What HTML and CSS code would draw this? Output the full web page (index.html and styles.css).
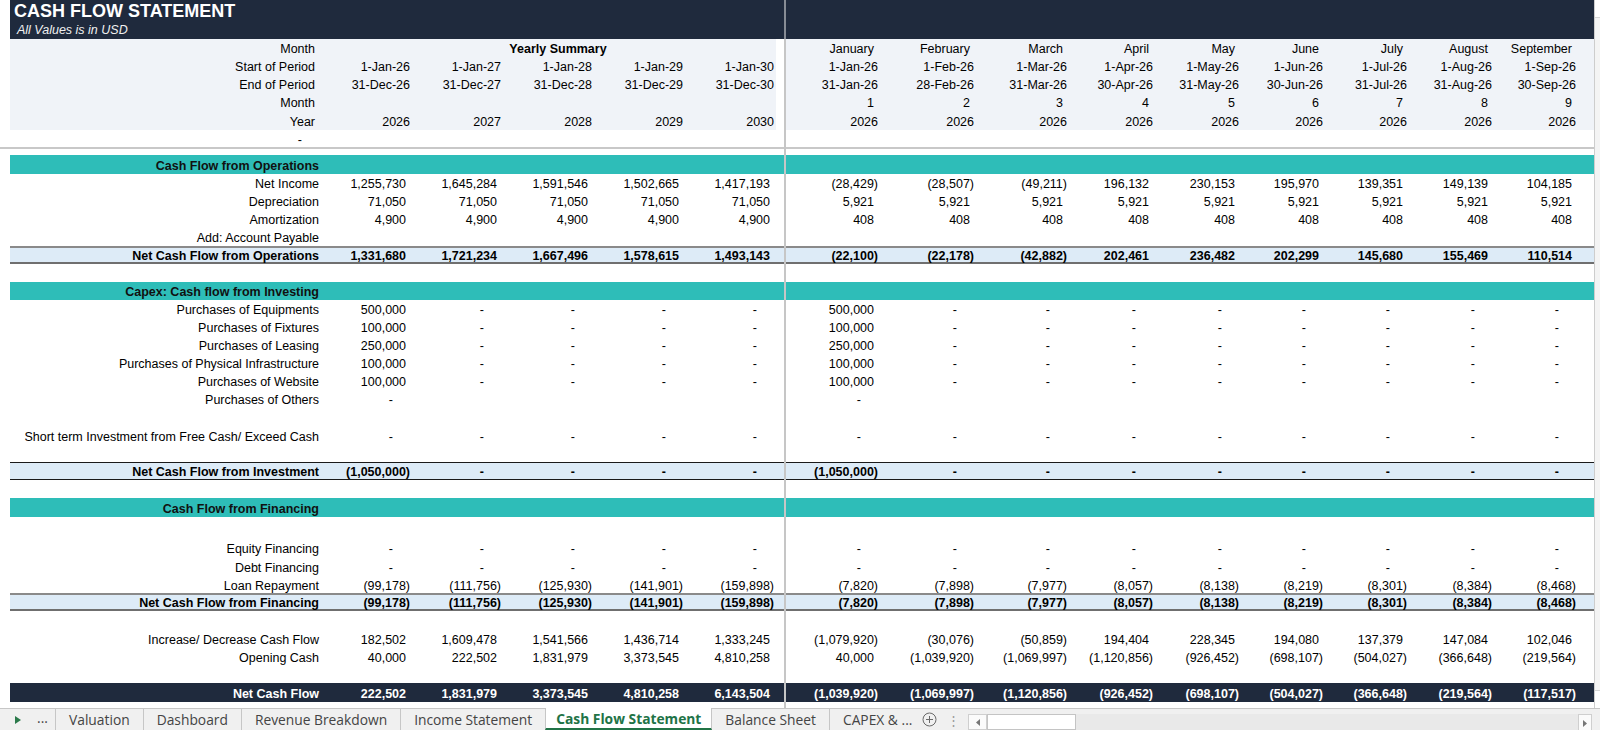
FILE: index.html
```html
<!DOCTYPE html>
<html lang="en">
<head>
<meta charset="utf-8">
<title>Cash Flow Statement</title>
<link rel="stylesheet" href="styles.css">
</head>
<body>
<div class="app">
  <div class="main">
    <div class="sheet">
      <div class="hdr">
        <div class="title">CASH FLOW STATEMENT</div>
        <div class="sub">All Values is in USD</div>
      </div>

      <div class="r hd lt"><span>Month</span><span class="ys">Yearly Summary</span><span class="gap"></span><span>January</span><span>February</span><span>March</span><span>April</span><span>May</span><span>June</span><span>July</span><span>August</span><span>September</span></div>
      <div class="r hd lt dt"><span>Start of Period</span><span>1-Jan-26</span><span>1-Jan-27</span><span>1-Jan-28</span><span>1-Jan-29</span><span>1-Jan-30</span><span class="gap"></span><span>1-Jan-26</span><span>1-Feb-26</span><span>1-Mar-26</span><span>1-Apr-26</span><span>1-May-26</span><span>1-Jun-26</span><span>1-Jul-26</span><span>1-Aug-26</span><span>1-Sep-26</span></div>
      <div class="r hd lt dt"><span>End of Period</span><span>31-Dec-26</span><span>31-Dec-27</span><span>31-Dec-28</span><span>31-Dec-29</span><span>31-Dec-30</span><span class="gap"></span><span>31-Jan-26</span><span>28-Feb-26</span><span>31-Mar-26</span><span>30-Apr-26</span><span>31-May-26</span><span>30-Jun-26</span><span>31-Jul-26</span><span>31-Aug-26</span><span>30-Sep-26</span></div>
      <div class="r hd lt"><span>Month</span><span></span><span></span><span></span><span></span><span></span><span class="gap"></span><span>1</span><span>2</span><span>3</span><span>4</span><span>5</span><span>6</span><span>7</span><span>8</span><span>9</span></div>
      <div class="r hd lt dt h19"><span>Year</span><span>2026</span><span>2027</span><span>2028</span><span>2029</span><span>2030</span><span class="gap"></span><span>2026</span><span>2026</span><span>2026</span><span>2026</span><span>2026</span><span>2026</span><span>2026</span><span>2026</span><span>2026</span></div>
      <div class="r dashrow h17"><span>-</span></div>
      <div class="freeze"></div>

      <div class="blank h6"></div>
      <div class="r teal h19"><span>Cash Flow from Operations</span></div>
      <div class="r"><span>Net Income</span><span>1,255,730</span><span>1,645,284</span><span>1,591,546</span><span>1,502,665</span><span>1,417,193</span><span class="gap"></span><span class="n">(28,429)</span><span class="n">(28,507)</span><span class="n">(49,211)</span><span>196,132</span><span>230,153</span><span>195,970</span><span>139,351</span><span>149,139</span><span>104,185</span></div>
      <div class="r"><span>Depreciation</span><span>71,050</span><span>71,050</span><span>71,050</span><span>71,050</span><span>71,050</span><span class="gap"></span><span>5,921</span><span>5,921</span><span>5,921</span><span>5,921</span><span>5,921</span><span>5,921</span><span>5,921</span><span>5,921</span><span>5,921</span></div>
      <div class="r"><span>Amortization</span><span>4,900</span><span>4,900</span><span>4,900</span><span>4,900</span><span>4,900</span><span class="gap"></span><span>408</span><span>408</span><span>408</span><span>408</span><span>408</span><span>408</span><span>408</span><span>408</span><span>408</span></div>
      <div class="r"><span>Add: Account Payable</span></div>
      <div class="r net b"><span>Net Cash Flow from Operations</span><span>1,331,680</span><span>1,721,234</span><span>1,667,496</span><span>1,578,615</span><span>1,493,143</span><span class="gap"></span><span class="n">(22,100)</span><span class="n">(22,178)</span><span class="n">(42,882)</span><span>202,461</span><span>236,482</span><span>202,299</span><span>145,680</span><span>155,469</span><span>110,514</span></div>
      <div class="blank"></div>

      <div class="r teal"><span>Capex: Cash flow from Investing</span></div>
      <div class="r"><span>Purchases of Equipments</span><span>500,000</span><span class="z">-</span><span class="z">-</span><span class="z">-</span><span class="z">-</span><span class="gap"></span><span>500,000</span><span class="z">-</span><span class="z">-</span><span class="z">-</span><span class="z">-</span><span class="z">-</span><span class="z">-</span><span class="z">-</span><span class="z">-</span></div>
      <div class="r"><span>Purchases of Fixtures</span><span>100,000</span><span class="z">-</span><span class="z">-</span><span class="z">-</span><span class="z">-</span><span class="gap"></span><span>100,000</span><span class="z">-</span><span class="z">-</span><span class="z">-</span><span class="z">-</span><span class="z">-</span><span class="z">-</span><span class="z">-</span><span class="z">-</span></div>
      <div class="r"><span>Purchases of Leasing</span><span>250,000</span><span class="z">-</span><span class="z">-</span><span class="z">-</span><span class="z">-</span><span class="gap"></span><span>250,000</span><span class="z">-</span><span class="z">-</span><span class="z">-</span><span class="z">-</span><span class="z">-</span><span class="z">-</span><span class="z">-</span><span class="z">-</span></div>
      <div class="r"><span>Purchases of Physical Infrastructure</span><span>100,000</span><span class="z">-</span><span class="z">-</span><span class="z">-</span><span class="z">-</span><span class="gap"></span><span>100,000</span><span class="z">-</span><span class="z">-</span><span class="z">-</span><span class="z">-</span><span class="z">-</span><span class="z">-</span><span class="z">-</span><span class="z">-</span></div>
      <div class="r"><span>Purchases of Website</span><span>100,000</span><span class="z">-</span><span class="z">-</span><span class="z">-</span><span class="z">-</span><span class="gap"></span><span>100,000</span><span class="z">-</span><span class="z">-</span><span class="z">-</span><span class="z">-</span><span class="z">-</span><span class="z">-</span><span class="z">-</span><span class="z">-</span></div>
      <div class="r"><span>Purchases of Others</span><span class="z">-</span><span></span><span></span><span></span><span></span><span class="gap"></span><span class="z">-</span></div>
      <div class="blank"></div>
      <div class="r h19"><span>Short term Investment from Free Cash/ Exceed Cash</span><span class="z">-</span><span class="z">-</span><span class="z">-</span><span class="z">-</span><span class="z">-</span><span class="gap"></span><span class="z">-</span><span class="z">-</span><span class="z">-</span><span class="z">-</span><span class="z">-</span><span class="z">-</span><span class="z">-</span><span class="z">-</span><span class="z">-</span></div>
      <div class="blank h17"></div>
      <div class="r inv b"><span>Net Cash Flow from Investment</span><span class="n">(1,050,000)</span><span class="z">-</span><span class="z">-</span><span class="z">-</span><span class="z">-</span><span class="gap"></span><span class="n">(1,050,000)</span><span class="z">-</span><span class="z">-</span><span class="z">-</span><span class="z">-</span><span class="z">-</span><span class="z">-</span><span class="z">-</span><span class="z">-</span></div>
      <div class="blank"></div>

      <div class="r teal h19"><span>Cash Flow from Financing</span></div>
      <div class="blank h21"></div>
      <div class="r h19"><span>Equity Financing</span><span class="z">-</span><span class="z">-</span><span class="z">-</span><span class="z">-</span><span class="z">-</span><span class="gap"></span><span class="z">-</span><span class="z">-</span><span class="z">-</span><span class="z">-</span><span class="z">-</span><span class="z">-</span><span class="z">-</span><span class="z">-</span><span class="z">-</span></div>
      <div class="r h19"><span>Debt Financing</span><span class="z">-</span><span class="z">-</span><span class="z">-</span><span class="z">-</span><span class="z">-</span><span class="gap"></span><span class="z">-</span><span class="z">-</span><span class="z">-</span><span class="z">-</span><span class="z">-</span><span class="z">-</span><span class="z">-</span><span class="z">-</span><span class="z">-</span></div>
      <div class="r h17"><span>Loan Repayment</span><span class="n">(99,178)</span><span class="n">(111,756)</span><span class="n">(125,930)</span><span class="n">(141,901)</span><span class="n">(159,898)</span><span class="gap"></span><span class="n">(7,820)</span><span class="n">(7,898)</span><span class="n">(7,977)</span><span class="n">(8,057)</span><span class="n">(8,138)</span><span class="n">(8,219)</span><span class="n">(8,301)</span><span class="n">(8,384)</span><span class="n">(8,468)</span></div>
      <div class="r net b"><span>Net Cash Flow from Financing</span><span class="n">(99,178)</span><span class="n">(111,756)</span><span class="n">(125,930)</span><span class="n">(141,901)</span><span class="n">(159,898)</span><span class="gap"></span><span class="n">(7,820)</span><span class="n">(7,898)</span><span class="n">(7,977)</span><span class="n">(8,057)</span><span class="n">(8,138)</span><span class="n">(8,219)</span><span class="n">(8,301)</span><span class="n">(8,384)</span><span class="n">(8,468)</span></div>
      <div class="blank h19"></div>

      <div class="r"><span>Increase/ Decrease Cash Flow</span><span>182,502</span><span>1,609,478</span><span>1,541,566</span><span>1,436,714</span><span>1,333,245</span><span class="gap"></span><span class="n">(1,079,920)</span><span class="n">(30,076)</span><span class="n">(50,859)</span><span>194,404</span><span>228,345</span><span>194,080</span><span>137,379</span><span>147,084</span><span>102,046</span></div>
      <div class="r"><span>Opening Cash</span><span>40,000</span><span>222,502</span><span>1,831,979</span><span>3,373,545</span><span>4,810,258</span><span class="gap"></span><span>40,000</span><span class="n">(1,039,920)</span><span class="n">(1,069,997)</span><span class="n">(1,120,856)</span><span class="n">(926,452)</span><span class="n">(698,107)</span><span class="n">(504,027)</span><span class="n">(366,648)</span><span class="n">(219,564)</span></div>
      <div class="blank h17"></div>
      <div class="r dk b h19"><span>Net Cash Flow</span><span>222,502</span><span>1,831,979</span><span>3,373,545</span><span>4,810,258</span><span>6,143,504</span><span class="gap"></span><span class="n">(1,039,920)</span><span class="n">(1,069,997)</span><span class="n">(1,120,856)</span><span class="n">(926,452)</span><span class="n">(698,107)</span><span class="n">(504,027)</span><span class="n">(366,648)</span><span class="n">(219,564)</span><span class="n">(117,517)</span></div>

      <div class="vline"></div>
    </div>
    <div class="vscroll"><div class="vbtn"></div><div class="vtrack"></div><div class="vbtn"></div></div>
  </div>

  <div class="tabbar">
    <span class="nav"><svg width="6" height="8" viewBox="0 0 6 8"><polygon points="0,0 6,4 0,8" fill="#2b7a4b"/></svg></span>
    <span class="more">...</span>
    <span class="tab">Valuation</span>
    <span class="tab">Dashboard</span>
    <span class="tab">Revenue Breakdown</span>
    <span class="tab">Income Statement</span>
    <span class="tab on">Cash Flow Statement</span>
    <span class="tab">Balance Sheet</span>
    <span class="tab last">CAPEX &amp; ...</span>
    <span class="add"><svg width="15" height="15" viewBox="0 0 15 15"><circle cx="7.5" cy="7.5" r="6.5" fill="none" stroke="#6a6a6a" stroke-width="1"/><path d="M7.5 4v7M4 7.5h7" stroke="#6a6a6a" stroke-width="1"/></svg></span>
    <span class="dots">⋮</span>
    <div class="hs">
      <span class="hbtn"><svg width="4" height="7" viewBox="0 0 4 7"><polygon points="4,0 0,3.5 4,7" fill="#777"/></svg></span>
      <span class="thumb"></span>
      <span class="track"></span>
      <span class="hbtn r"><svg width="4" height="7" viewBox="0 0 4 7"><polygon points="0,0 4,3.5 0,7" fill="#777"/></svg></span>
    </div>
  </div>
</div>
</body>
</html>
```

FILE: styles.css
```css
* { box-sizing: border-box; }
html, body { margin: 0; padding: 0; }
body {
  width: 1600px;
  height: 730px;
  overflow: hidden;
  background: #fff;
  color: #000;
  font-family: "Liberation Sans", Arial, sans-serif;
  font-size: 12.5px;
}
.app { display: flex; flex-direction: column; height: 730px; }
.main { display: flex; height: 708px; }
.sheet { position: relative; width: 1594px; padding-left: 10px; }

.hdr { background: #1f2a3d; color: #fff; }
.title { height: 22px; line-height: 22px; font-size: 18px; font-weight: bold; padding-left: 4px; }
.sub { height: 17px; line-height: 17px; font-style: italic; padding-left: 7px; color: #f0f0f0; }

.r {
  display: grid;
  grid-template-columns: 311px repeat(5, 91px) 10px 94px 96px 93px 86px 86px 84px 84px 85px 84px 16px;
  height: 18px;
  align-items: center;
}
.r > span {
  text-align: right;
  white-space: nowrap;
  overflow: hidden;
  padding-right: 6px;
  padding-top: 2px;
  line-height: 14px;
}
.r > .n { padding-right: 2px; }
.r > .z { padding-right: 19px; }
.dt > span { padding-right: 2px; }
.r > span:first-child { padding-right: 2px; }
.hd > span:first-child { padding-right: 6px; }
.dashrow > span:first-child { padding-right: 19px; }
.r > .ys { grid-column: span 5; text-align: center; padding: 2px 6px 0 25px; font-weight: bold; }

.lt { background: #f0f3f8; }
.lt > .gap { background: #fff; align-self: stretch; }

.h6 { height: 6px; }
.h17 { height: 17px; }
.h19 { height: 19px; }
.h21 { height: 21px; }
.blank { height: 18px; }
.blank.h6 { height: 6px; }
.blank.h17 { height: 17px; }
.blank.h19 { height: 19px; }
.blank.h21 { height: 21px; }

.freeze { height: 2px; margin-left: -10px; background: #c8c8c8; }

.teal { background: #2ebdb8; }
.teal > span { font-weight: bold; color: #111; }
.b > span { font-weight: bold; }
.net { background: #ddebf7; border-top: 2px solid #8a8a8a; border-bottom: 2px solid #6f6f6f; }
.inv { background: #ddebf7; border-top: 1px solid #1a1a1a; border-bottom: 1px solid #1a1a1a; }
.dk { background: #1f2a3d; color: #fff; }

.vline {
  position: absolute;
  left: 784px;
  top: 0;
  width: 2px;
  height: 708px;
  background: linear-gradient(#878c95 0, #878c95 39px, #c6c6c6 39px);
}

.vscroll { width: 6px; border-left: 1px solid #cdcdcd; background: #f4f4f4; display: flex; flex-direction: column; }
.vbtn { height: 18px; background: #fff; border-bottom: 1px solid #d6d6d6; }
.vbtn:last-child { border-top: 1px solid #d6d6d6; border-bottom: 0; }
.vtrack { flex: 1; }

.tabbar {
  height: 22px;
  border-top: 1px solid #c6c6c6;
  background: #f0f0f0;
  display: flex;
  align-items: stretch;
  font-family: "Open Sans", "Noto Sans", sans-serif;
  font-size: 13.8px;
  color: #444;
}
.nav { width: 30px; display: flex; align-items: center; padding-left: 15px; }
.more { width: 25px; display: flex; align-items: center; justify-content: center; padding-bottom: 4px; }
.tab { display: flex; align-items: center; padding: 0 13px; border-left: 1px solid #c6c6c6; white-space: nowrap; }
.tab.on {
  background: #fff;
  color: #217346;
  font-weight: bold;
  padding: 0 10px;
  margin-top: -1px;
  border-right: 1px solid #c6c6c6;
  border-bottom: 2px solid #217346;
}
.tab.on + .tab { border-left: 0; }
.tab.last { padding-right: 6px; }
.add { display: flex; align-items: center; padding: 0 4px; }
.dots { display: flex; align-items: center; padding: 0 8px 0 6px; color: #999; font-size: 13px; }
.hs { flex: 1; display: flex; align-self: flex-end; height: 16px; margin-right: 8px; background: #e9e9e9; }
.hbtn { width: 19px; display: flex; align-items: center; justify-content: center; background: #fbfbfb; border: 1px solid #cfcfcf; }
.hbtn.r { width: 14px; }
.thumb { width: 89px; background: #fff; border: 1px solid #c4c4c4; }
.track { flex: 1; }
```
